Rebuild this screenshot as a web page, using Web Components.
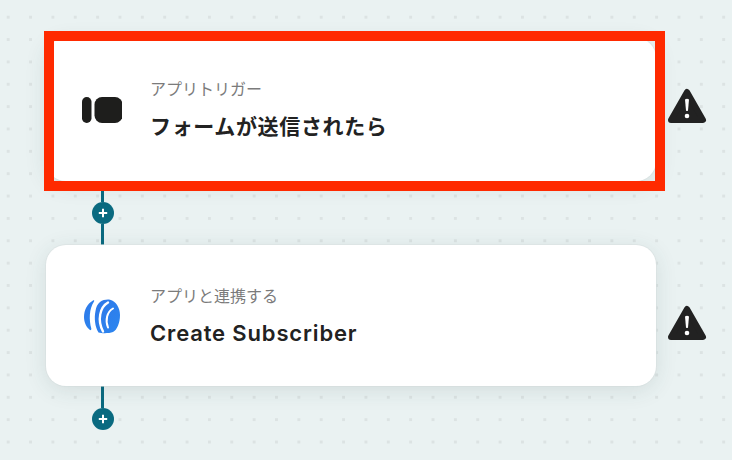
<!DOCTYPE html>
<html lang="ja"><head><meta charset="utf-8">
<style>
html,body{margin:0;padding:0}
body{width:732px;height:460px;overflow:hidden;background-color:#eaf2f2;font-family:Inter,"Noto Sans CJK JP",sans-serif}
</style></head><body>
<template id="flow-canvas-t"><style>
:host{display:flex;flex-direction:column;box-sizing:border-box;width:732px;height:460px;padding:38px 0 0 46px;overflow:hidden;
background-image:radial-gradient(circle at center,#dce3e3 0,#dce3e3 1.4px,transparent 1.9px);background-size:22.36px 22.36px;background-position:-3px 6px}
</style><slot></slot></template>
<template id="flow-step-t"><style>
:host{display:flex;align-items:flex-start;gap:11px;width:660px;position:relative}
.card{box-sizing:border-box;width:610px;flex:none;height:var(--h,141px);background:#fff;border-radius:20px;box-shadow:0 4px 22px rgba(40,70,70,.12),0 0 0 1px rgba(225,232,232,.6);display:flex;align-items:center;padding:0 0 0 36px;gap:28px}
.txt{display:flex;flex-direction:column;gap:var(--gap,13px);padding-top:var(--pt,1px)}
.label{font-size:16px;line-height:20px;color:#7b7b7b;letter-spacing:0}
.title{font-size:var(--fs,21px);line-height:28px;font-weight:600;color:#222;letter-spacing:var(--ls,.65px);white-space:nowrap}
.icon{width:40px;height:40px;display:flex}
.warn{width:40px;height:36px;display:block;flex:none;margin-top:var(--warn,59px)}
:host([selected]) .sel{display:block}
.sel{display:none;position:absolute;left:-2px;top:-7px;width:621px;height:160px;box-sizing:border-box;border:10px solid #ff2a00;pointer-events:none}
</style>
<div class="card"><div class="icon"><slot name="icon"></slot></div><div class="txt"><div class="label"><slot name="label"></slot></div><div class="title"><slot name="title"></slot></div></div></div>
<svg class="warn" viewBox="0 0 40 36"><path d="M20 5 L36 33 H4 Z" fill="#222" stroke="#222" stroke-width="6" stroke-linejoin="round"/><path d="M18 12.500Q20 11 22 12.500L21 23.500Q20 24.500 19 23.500Z" fill="#fff"/><circle cx="20" cy="29" r="2.300" fill="#fff"/></svg>
<div class="sel"></div></template>
<template id="flow-link-t"><style>
:host{display:flex;flex-direction:column;align-items:flex-start;width:22px;margin-left:46px;height:64px}
.l{width:3px;background:#0a6a80;flex:1;margin-left:9px}
.b{width:22px;height:22px;border-radius:50%;background:#0a6a80;flex:none;display:flex;align-items:center;justify-content:center}
:host([end]){height:44px}
:host([end]) .l:last-child{display:none}
</style><div class="l"></div><div class="b"><svg width="10" height="10" viewBox="0 0 10 10"><path d="M5 .8v8.400M.8 5h8.400" stroke="#fff" stroke-width="2" fill="none"/></svg></div><div class="l"></div></template>
<flow-canvas>
<flow-step selected style="--h:143px;--warn:49px;--gap:14px;--pt:1px">
<svg slot="icon" width="40" height="40" viewBox="0 0 40 40"><rect x="0" y="7" width="9.500" height="26" rx="4.700" fill="#1e1e1c"/><rect x="12.500" y="7" width="28" height="26" rx="7.500" fill="#1e1e1c"/></svg>
<span slot="label">アプリトリガー</span><span slot="title">フォームが送信されたら</span>
</flow-step>
<flow-link></flow-link>
<flow-step style="--ls:.85px;--fs:22px">
<svg slot="icon" width="40" height="40" viewBox="0 0 40 40"><defs><linearGradient id="g" x1="0" y1="0" x2="1" y2="1"><stop offset="0" stop-color="#2f78e8"/><stop offset="1" stop-color="#2b86f0"/></linearGradient></defs>
<path d="M11 4.500C5 8 2 14 2 21C2 26 4 31 8 34C9 34.500 9.500 33.500 9.300 32.500C7 24 7 13 12 5.500C12.500 4.500 12 4 11 4.500Z" fill="url(#g)"/><path d="M18 6C21 4 25 3.200 28 3.800C34 5 38 12 38 19C38 27 35 34 31 36C27 37.500 20 37.500 16.500 36.500C13 31 12 22 13.500 15C14 11 15.500 8 18 6Z" fill="url(#g)"/><path d="M26 6.500C18 11 15 24 21 35.500" stroke="#fff" stroke-width="2.400" fill="none" stroke-linecap="round"/><path d="M31 12.500C25 16 23 24 26 31.500" stroke="#fff" stroke-width="2" fill="none" stroke-linecap="round"/></svg>
<span slot="label">アプリと連携する</span><span slot="title">Create Subscriber</span>
</flow-step>
<flow-link end></flow-link>
</flow-canvas>
<script>
for(const n of ['flow-canvas','flow-step','flow-link']){
 customElements.define(n,class extends HTMLElement{constructor(){super();this.attachShadow({mode:'open'}).appendChild(document.getElementById(n+'-t').content.cloneNode(true));}});
}
</script>
</body></html>
